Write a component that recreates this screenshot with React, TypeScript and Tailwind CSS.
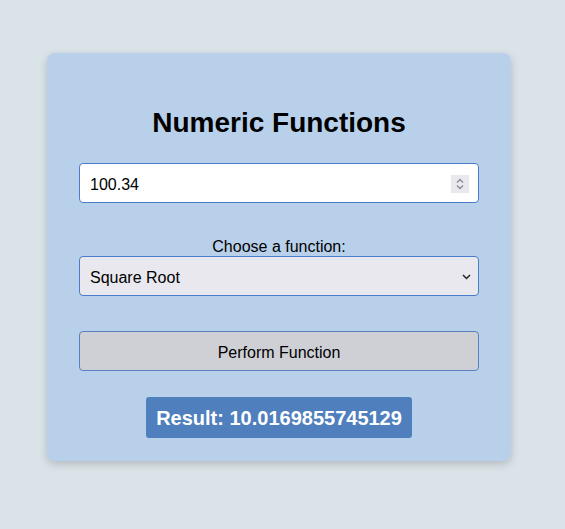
import { useState } from 'react';

export default function App() {
  const [value, setValue] = useState('100.34');
  const [fn, setFn] = useState('sqrt');

  return (
    <div className="min-h-[529px] w-full bg-[#dae3e8] pt-[53px] font-['Liberation_Sans',Arial,sans-serif] text-black">
      <div className="ml-[47px] flex w-[464px] flex-col items-center rounded-lg bg-[#b9d0ea] px-8 pb-[23px] pt-[54px] shadow-[0_3px_8px_rgba(0,0,0,0.18)]">
        <h1 className="h-8 text-[28px] font-bold leading-8">Numeric Functions</h1>

        <div className="relative mt-6 w-full">
          <input
            type="text"
            value={value}
            onChange={(e) => setValue(e.target.value)}
            className="h-10 w-full rounded border border-[#4a7dc9] bg-white px-[10px] pt-[3px] text-base outline-none"
          />
          <div className="absolute right-[10px] top-[12px] flex h-[18px] w-[18px] items-center justify-center bg-[#e9e9ed]">
            <svg width="10" height="14" viewBox="0 0 10 14" fill="none" stroke="#8a8a93" strokeWidth="1.4">
              <path d="M2 5.5 L5 2.5 L8 5.5" />
              <path d="M2 8.5 L5 11.5 L8 8.5" />
            </svg>
          </div>
        </div>

        <label className="mt-[35px] h-[18px] text-base leading-[18px]">Choose a function:</label>
        <div className="relative w-full">
          <select
            value={fn}
            onChange={(e) => setFn(e.target.value)}
            className="h-10 w-full appearance-none rounded border border-[#4a7dc9] bg-[#e9e8ee] px-[10px] pt-[3px] text-base outline-none"
          >
            <option value="sqrt">Square Root</option>
            <option value="abs">Absolute Value</option>
            <option value="round">Round</option>
          </select>
          <svg
            className="pointer-events-none absolute right-[8px] top-[18px]"
            width="9"
            height="6"
            viewBox="0 0 9 6"
            fill="none"
            stroke="#222"
            strokeWidth="1.5"
          >
            <path d="M1 1 L4.5 4.5 L8 1" />
          </svg>
        </div>

        <button className="mt-[35px] h-10 w-full rounded border border-[#5a80c0] bg-[#cfd0d5] pt-[3px] text-base">
          Perform Function
        </button>

        <div className="mt-[26px] flex h-[41px] items-center rounded-[3px] bg-[#4f7fbd] px-[10px] text-xl font-bold text-white">
          Result: 10.0169855745129
        </div>
      </div>
    </div>
  );
}
